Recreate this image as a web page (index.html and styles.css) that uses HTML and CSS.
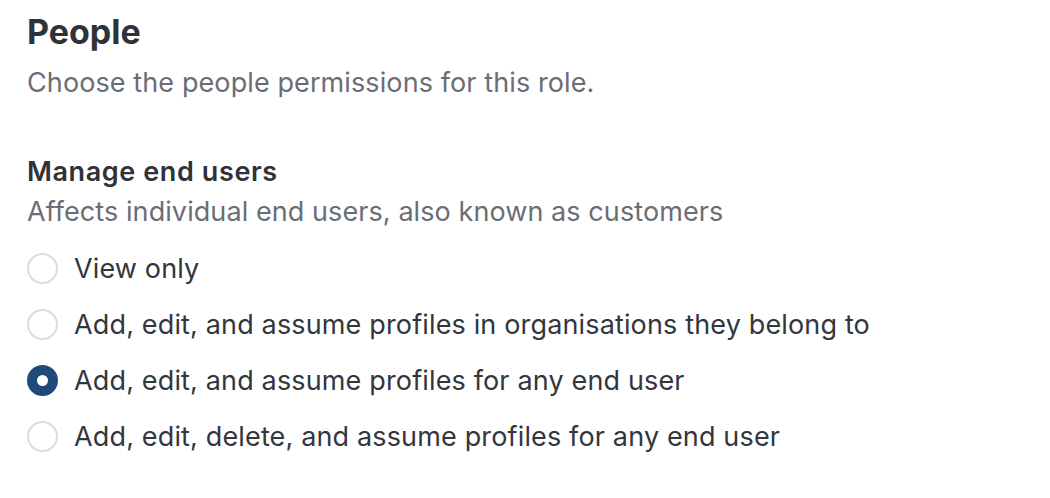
FILE: index.html
```html
<!DOCTYPE html>
<html lang="en">
<head>
    <meta charset="UTF-8">
    <meta name="viewport" content="width=device-width, initial-scale=1.0">
    <title>Role permissions - People</title>
    <link rel="stylesheet" href="styles.css">
</head>
<body>

    <section class="permissions">
        <h2>People</h2>
        <p class="intro">Choose the people permissions for this role.</p>

        <!-- Manage end users -->
        <fieldset class="group">
            <legend>Manage end users</legend>
            <p class="hint">Affects individual end users, also known as customers</p>

            <label class="option">
                <input type="radio" name="end_users" value="view">
                <span>View only</span>
            </label>
            <label class="option">
                <input type="radio" name="end_users" value="edit_org">
                <span>Add, edit, and assume profiles in organisations they belong to</span>
            </label>
            <label class="option">
                <input type="radio" name="end_users" value="edit_any" checked>
                <span>Add, edit, and assume profiles for any end user</span>
            </label>
            <label class="option">
                <input type="radio" name="end_users" value="delete_any">
                <span>Add, edit, delete, and assume profiles for any end user</span>
            </label>
        </fieldset>
    </section>

</body>
</html>
```

FILE: styles.css
```css
body {
    margin: 0;
    background: #fff;
    font-family: Inter, "Noto Sans", sans-serif;
    color: #33363d;
}
.permissions {
    padding: 12px 27px;
}
h2 {
    margin: 0;
    font-size: 34px;
    line-height: 40px;
    font-weight: 700;
    color: #2f3237;
}
.intro {
    margin: 15px 0 0;
    font-size: 27px;
    line-height: 32px;
    letter-spacing: 0.1px;
    color: #6b6d75;
}
.group {
    border: none;
    margin: 57px 0 0;
    padding: 0;
}
.group legend {
    padding: 0;
    font-size: 27px;
    line-height: 32px;
    font-weight: 600;
    letter-spacing: 0.6px;
    color: #2f3237;
}
.hint {
    margin: 8px 0 12px;
    font-size: 27px;
    line-height: 32px;
    letter-spacing: 0.08px;
    color: #6b6d75;
}
.option {
    display: flex;
    align-items: center;
    gap: 16px;
    height: 56px;
    font-size: 27px;
    letter-spacing: 0.15px;
    color: #33363d;
    cursor: pointer;
}
.option input {
    appearance: none;
    margin: 0;
    width: 31px;
    height: 31px;
    border: 2px solid #dcdcde;
    border-radius: 50%;
    background: #fff;
    flex-shrink: 0;
}
.option input:checked {
    border: 10.5px solid #1f4a7a;
}
```
